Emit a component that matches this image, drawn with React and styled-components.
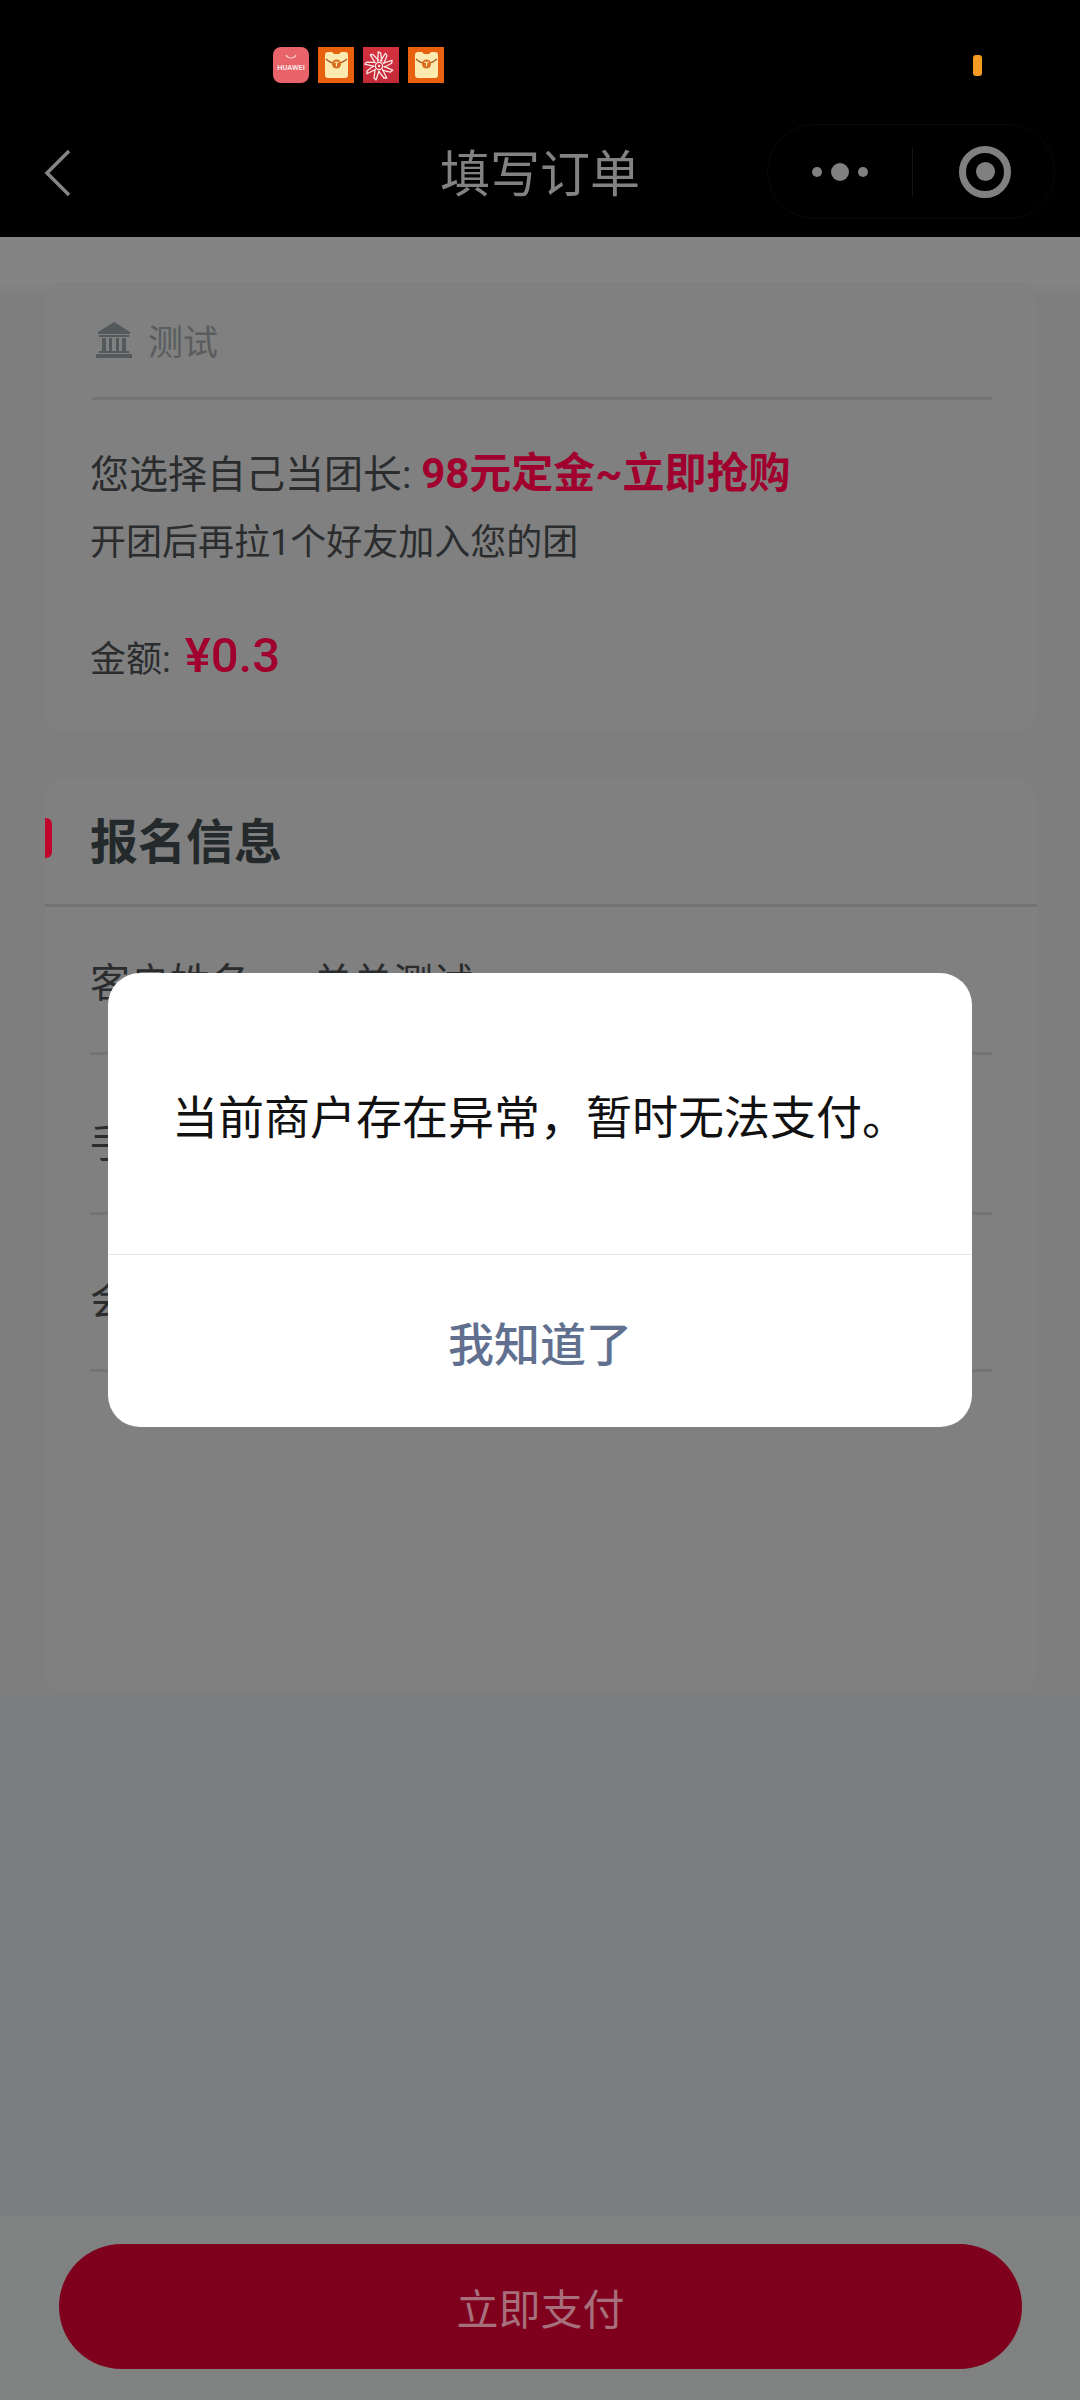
import React from "react";
import styled, { createGlobalStyle } from "styled-components";

const Global = createGlobalStyle`
  html, body { margin: 0; padding: 0; background: #7c7d80; }
  * { box-sizing: border-box; }
  body { font-family: Roboto, "Noto Sans CJK SC", sans-serif; }
`;

const Page = styled.div`
  position: relative;
  width: 1080px;
  height: 2400px;
  overflow: hidden;
  display: flex;
  flex-direction: column;
  background: #7c7d80;
`;

const StatusBar = styled.div`
  height: 110px;
  flex: none;
  background: #000;
  display: flex;
  align-items: flex-start;
  padding: 47px 0 0 273px;
`;
const StatusIcons = styled.div`
  display: flex;
  gap: 9px;
`;
const AppIcon = styled.svg`
  width: 36px;
  height: 36px;
  display: block;
`;
const BatteryDot = styled.div`
  width: 9px;
  height: 21px;
  border-radius: 3px;
  background: #f59a23;
  margin: 8px 0 0 529px;
`;

const NavBar = styled.header`
  height: 127px;
  flex: none;
  background: #000;
  display: grid;
  grid-template-columns: 1fr auto 1fr;
  align-items: center;
  padding: 0 25px;
`;
const Title = styled.h1`
  margin: 0;
  font-size: 50px;
  font-weight: 400;
  color: #828282;
  line-height: 60px;
  position: relative;
  top: 1px;
`;
const BackIcon = styled.svg`
  width: 28px;
  height: 48px;
  margin-left: 19px;
  position: relative;
  top: -1px;
  display: block;
`;
const Capsule = styled.div`
  justify-self: end;
  width: 288px;
  height: 95px;
  border: 1px solid #0a0a0a;
  border-radius: 48px;
  position: relative;
  top: -2px;
  display: flex;
  align-items: center;
`;
const MoreBtn = styled.div`
  width: 144px;
  display: flex;
  align-items: center;
  justify-content: center;
  gap: 9px;
`;
const Dot = styled.span`
  width: ${(p) => p.$size}px;
  height: ${(p) => p.$size}px;
  border-radius: 50%;
  background: #808080;
`;
const CapsuleDivider = styled.span`
  width: 1px;
  height: 48px;
  background: #151515;
`;
const CloseBtn = styled.div`
  flex: 1;
  display: flex;
  justify-content: center;
  padding-left: 3px;
`;
const Ring = styled.div`
  width: 52px;
  height: 52px;
  border: 7px solid #808080;
  border-radius: 50%;
  display: flex;
  align-items: center;
  justify-content: center;
  &::after {
    content: "";
    width: 19px;
    height: 19px;
    border-radius: 50%;
    background: #808080;
  }
`;

const Content = styled.main`
  flex: 1;
  display: flex;
  flex-direction: column;
  gap: 46px;
  padding: 45px 43px 0 45px;
  background: linear-gradient(#848484 0, #848484 45px, #7e7e7f 60px, #7e7e7f 1453px, #7c7d80 1458px);
`;
const Card = styled.section`
  background: #808080;
  border-radius: 20px;
  min-height: ${(p) => p.$min}px;
`;
const Shop = styled.div`
  margin: 0 45px 0 47px;
  height: 118px;
  display: flex;
  align-items: center;
  gap: 16px;
  border-bottom: 3px solid #747474;
  padding: 0 0 0 4px;
  font-size: 35px;
  color: #5a5c5e;
`;
const Info = styled.div`
  padding: 40px 45px 37px 45px;
`;
const Line = styled.p`
  margin: 0;
  font-size: ${(p) => p.$size || 36}px;
  line-height: 68px;
  color: #2a2c2e;
  white-space: nowrap;
`;
const Accent = styled.span`
  color: #a1002e;
  font-size: ${(p) => p.$size || 42}px;
  font-weight: ${(p) => p.$weight || 700};
  margin-left: ${(p) => p.$gap || 0}px;
`;
const Amount = styled(Line)`
  margin-top: 44px;
  line-height: 70px;
`;

const SectionHead = styled.div`
  height: 129px;
  display: flex;
  align-items: center;
  gap: 38px;
  border-bottom: 3px solid #737373;
`;
const Bar = styled.span`
  width: 7px;
  height: 40px;
  margin-top: -6px;
  border-radius: 0 6px 6px 0;
  background: #c0042c;
`;
const SectionTitle = styled.h2`
  margin: 4px 0 0;
  font-size: 48px;
  font-weight: 700;
  color: #24292b;
  line-height: 60px;
`;
const Rows = styled.div`
  padding: 0 45px;
`;
const Row = styled.div`
  height: ${(p) => p.$h}px;
  display: flex;
  align-items: flex-end;
  padding-bottom: 40px;
  border-bottom: 3px solid #747474;
  font-size: 40px;
  line-height: 56px;
  color: #2a2c2e;
  white-space: nowrap;
`;
const RowLabel = styled.span`
  width: 223px;
`;

const Footer = styled.footer`
  height: 184px;
  flex: none;
  background: #808181;
  padding: 28px 58px 31px 59px;
`;
const PayButton = styled.div`
  height: 125px;
  border-radius: 63px;
  background: #7f001d;
  color: #a66f7b;
  font-size: 42px;
  display: flex;
  align-items: center;
  justify-content: center;
`;

const Dialog = styled.div`
  position: absolute;
  left: 108px;
  top: 973px;
  width: 864px;
  height: 454px;
  background: #fff;
  border-radius: 32px;
  display: flex;
  flex-direction: column;
`;
const Message = styled.div`
  height: 282px;
  flex: none;
  border-bottom: 1px solid #e6e6e6;
  display: flex;
  align-items: center;
  justify-content: center;
  font-size: 46px;
  color: #111;
  white-space: nowrap;
`;
const Confirm = styled.div`
  flex: 1;
  display: flex;
  align-items: center;
  justify-content: center;
  font-size: 46px;
  font-weight: 500;
  color: #61708f;
`;

const HuaweiIcon = () => (
  <AppIcon viewBox="0 0 36 36">
    <rect width="36" height="36" rx="8" fill="#e9636a" />
    <path d="M13 8c2 4 8 4 10 0" stroke="#f9d0d1" strokeWidth="1.2" fill="none" />
    <text x="18" y="23" textAnchor="middle" fontSize="7.4" fontWeight="700" fill="#fbe2e2" fontFamily="Roboto, sans-serif">
      HUAWEI
    </text>
  </AppIcon>
);
const EnvelopeIcon = () => (
  <AppIcon viewBox="0 0 36 36">
    <rect width="36" height="36" fill="#e8610f" />
    <rect x="7" y="5" width="23" height="26" rx="3" fill="#fdeab0" />
    <path d="M14 5h9l-2 2h-5z" fill="#e8610f" />
    <path d="M8 12q10 9 21 0" stroke="#a5521c" strokeWidth="1.3" fill="none" />
    <circle cx="18.5" cy="17" r="4.6" fill="#d9701f" />
    <path d="M16.2 15.2h4.6M18.5 15.2v4.4" stroke="#fdeab0" strokeWidth="1.1" />
  </AppIcon>
);
const FlowerIcon = () => (
  <AppIcon viewBox="0 0 36 36">
    <defs>
      <linearGradient id="flowerBg" x1="0" y1="0" x2="0" y2="1">
        <stop offset="0" stopColor="#d6313f" />
        <stop offset="1" stopColor="#c22a38" />
      </linearGradient>
    </defs>
    <rect width="36" height="36" fill="url(#flowerBg)" />
    <g fill="none" stroke="#fbe6e3" strokeWidth="1.3" strokeLinecap="round" strokeLinejoin="round">
      {[15, 55, 95, 135, 180, 225, 265, 310, 345].map((a) => (
        <path key={a} d="M16 14 19 5l2 2-1 8" transform={`rotate(${a} 16 19)`} />
      ))}
      <circle cx="16" cy="19" r="3.6" />
    </g>
    <circle cx="16" cy="19" r="1.2" fill="#fbe6e3" />
  </AppIcon>
);
const BankIcon = () => (
  <svg width="36" height="36" viewBox="0 0 36 36" fill="#54595c" style={{ display: "block" }}>
    <path d="M18 0 34 10v2H2v-2z" />
    <path d="M3 13h30v2H3zM6 16h4v13H6zM13 16h3v13h-3zM20 16h3v13h-3zM26 16h4v13h-4zM3 29h30v2H3zM0 32h36v4H0z" />
  </svg>
);

export default function App() {
  return (
    <Page>
      <Global />
      <StatusBar>
        <StatusIcons>
          <HuaweiIcon />
          <EnvelopeIcon />
          <FlowerIcon />
          <EnvelopeIcon />
        </StatusIcons>
        <BatteryDot />
      </StatusBar>
      <NavBar>
        <BackIcon viewBox="0 0 28 48">
          <path d="M25 2 3 24l22 22" fill="none" stroke="#858585" strokeWidth="3.5" />
        </BackIcon>
        <Title>填写订单</Title>
        <Capsule>
          <MoreBtn>
            <Dot $size={10} />
            <Dot $size={18} />
            <Dot $size={10} />
          </MoreBtn>
          <CapsuleDivider />
          <CloseBtn>
            <Ring />
          </CloseBtn>
        </Capsule>
      </NavBar>
      <Content>
        <Card $min={445}>
          <Shop>
            <BankIcon />
            测试
          </Shop>
          <Info>
            <Line $size={39}>
              您选择自己当团长: <Accent>98元定金~立即抢购</Accent>
            </Line>
            <Line>开团后再拉1个好友加入您的团</Line>
            <Amount>
              金额: <Accent $size={49} $weight={500} $gap={5}>¥0.3</Accent>
            </Amount>
          </Info>
        </Card>
        <Card $min={914}>
          <SectionHead>
            <Bar />
            <SectionTitle>报名信息</SectionTitle>
          </SectionHead>
          <Rows>
            <Row $h={148}>
              <RowLabel>客户姓名</RowLabel>单单测试
            </Row>
            <Row $h={160}>
              <RowLabel>手机号码</RowLabel>
            </Row>
            <Row $h={157}>
              <RowLabel>会员编号</RowLabel>
            </Row>
          </Rows>
        </Card>
      </Content>
      <Footer>
        <PayButton>立即支付</PayButton>
      </Footer>
      <Dialog>
        <Message>当前商户存在异常，暂时无法支付。</Message>
        <Confirm>我知道了</Confirm>
      </Dialog>
    </Page>
  );
}
